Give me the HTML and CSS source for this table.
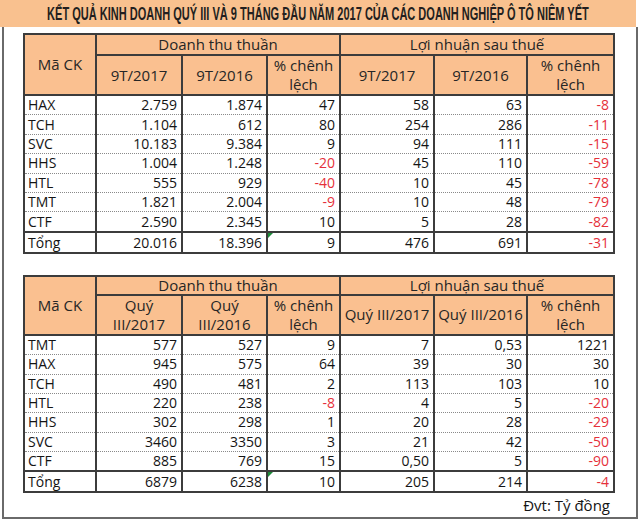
FILE: index.html
```html
<!DOCTYPE html>
<html lang="vi">
<head>
<meta charset="utf-8">
<title>Kết quả kinh doanh</title>
<link rel="stylesheet" href="styles.css">
</head>
<body>
<div class="page">
  <div class="title"><span class="title-text">KẾT QUẢ KINH DOANH QUÝ III VÀ 9 THÁNG ĐẦU NĂM 2017 CỦA CÁC DOANH NGHIỆP Ô TÔ NIÊM YẾT</span></div>
  <div class="frame">
    <table class="tbl t1">
      <colgroup><col class="c1"><col class="c2"><col class="c3"><col class="c4"><col class="c5"><col class="c6"><col class="c7"></colgroup>
      <thead>
        <tr class="h1"><th rowspan="2">Mã CK</th><th colspan="3">Doanh thu thuần</th><th colspan="3">Lợi nhuận sau thuế</th></tr>
        <tr class="h2"><th>9T/2017</th><th>9T/2016</th><th>% chênh<br>lệch</th><th>9T/2017</th><th>9T/2016</th><th>% chênh<br>lệch</th></tr>
      </thead>
      <tbody>
        <tr><td>HAX</td><td>2.759</td><td>1.874</td><td>47</td><td>58</td><td>63</td><td class="neg">-8</td></tr>
        <tr><td>TCH</td><td>1.104</td><td>612</td><td>80</td><td>254</td><td>286</td><td class="neg">-11</td></tr>
        <tr><td>SVC</td><td>10.183</td><td>9.384</td><td>9</td><td>94</td><td>111</td><td class="neg">-15</td></tr>
        <tr><td>HHS</td><td>1.004</td><td>1.248</td><td class="neg">-20</td><td>45</td><td>110</td><td class="neg">-59</td></tr>
        <tr><td>HTL</td><td>555</td><td>929</td><td class="neg">-40</td><td>10</td><td>45</td><td class="neg">-78</td></tr>
        <tr><td>TMT</td><td>1.821</td><td>2.004</td><td class="neg">-9</td><td>10</td><td>48</td><td class="neg">-79</td></tr>
        <tr class="last"><td>CTF</td><td>2.590</td><td>2.345</td><td>10</td><td>5</td><td>28</td><td class="neg">-82</td></tr>
        <tr class="total"><td>Tổng</td><td>20.016</td><td>18.396</td><td class="flag">9</td><td>476</td><td>691</td><td class="neg">-31</td></tr>
      </tbody>
    </table>

    <table class="tbl t2">
      <colgroup><col class="c1"><col class="c2"><col class="c3"><col class="c4"><col class="c5"><col class="c6"><col class="c7"></colgroup>
      <thead>
        <tr class="h1"><th rowspan="2">Mã CK</th><th colspan="3">Doanh thu thuần</th><th colspan="3">Lợi nhuận sau thuế</th></tr>
        <tr class="h2"><th>Quý<br>III/2017</th><th>Quý<br>III/2016</th><th>% chênh<br>lệch</th><th>Quý III/2017</th><th>Quý III/2016</th><th>% chênh<br>lệch</th></tr>
      </thead>
      <tbody>
        <tr><td>TMT</td><td>577</td><td>527</td><td>9</td><td>7</td><td>0,53</td><td>1221</td></tr>
        <tr><td>HAX</td><td>945</td><td>575</td><td>64</td><td>39</td><td>30</td><td>30</td></tr>
        <tr><td>TCH</td><td>490</td><td>481</td><td>2</td><td>113</td><td>103</td><td>10</td></tr>
        <tr><td>HTL</td><td>220</td><td>238</td><td class="neg">-8</td><td>4</td><td>5</td><td class="neg">-20</td></tr>
        <tr><td>HHS</td><td>302</td><td>298</td><td>1</td><td>20</td><td>28</td><td class="neg">-29</td></tr>
        <tr><td>SVC</td><td>3460</td><td>3350</td><td>3</td><td>21</td><td>42</td><td class="neg">-50</td></tr>
        <tr class="last"><td>CTF</td><td>885</td><td>769</td><td>15</td><td>0,50</td><td>5</td><td class="neg">-90</td></tr>
        <tr class="total"><td>Tổng</td><td>6879</td><td>6238</td><td class="flag">10</td><td>205</td><td>214</td><td class="neg">-4</td></tr>
      </tbody>
    </table>
    <div class="unit">Đvt: Tỷ đồng</div>
  </div>
</div>
</body>
</html>
```
FILE: styles.css
```css
html, body {
  margin: 0;
  padding: 0;
  background: #ffffff;
}
.page {
  width: 640px;
  height: 520px;
  overflow: hidden;
  font-family: "Open Sans", "Noto Sans", sans-serif;
  color: #141414;
}
.title {
  width: 636px;
  height: 27px;
  background: #f9c18f;
  display: flex;
  justify-content: center;
  align-items: center;
  white-space: nowrap;
}
.title-text {
  display: inline-block;
  flex: none;
  color: #231f20;
  font-family: "Liberation Sans", "Arial", sans-serif;
  font-weight: bold;
  font-size: 19px;
  line-height: 27px;
  transform: scaleX(0.58);
  transform-origin: center;
}
.frame {
  box-sizing: border-box;
  margin: 0 2px 0 2px;
  height: 492px;
  border: 2px solid #6a6a6a;
  border-top: none;
  padding: 6px 0 0 19px;
}
.tbl {
  border-collapse: collapse;
  table-layout: fixed;
  width: 590px;
  font-size: 14px;
  font-weight: 500;
  border: 2px solid #3c3c3c;
}
.c1 { width: 72px; }
.c2 { width: 86px; }
.c3 { width: 85px; }
.c4 { width: 73px; }
.c5 { width: 94px; }
.c6 { width: 93px; }
.c7 { width: 87px; }
.t1 { margin-bottom: 21px; }
.tbl th {
  background: #fac090;
  font-weight: normal;
  font-size: 15px;
  color: #262626;
  border: 2px solid #3c3c3c;
  padding: 0 2px;
  text-align: center;
  line-height: 19px;
}
.tbl .h1 th { height: 19px; }
.t2 .h1 th { height: 17px; line-height: 17px; }
.tbl .h2 th { height: 38px; }
.tbl td {
  text-align: right;
  padding: 0 4px 0 3px;
  height: 18.4px;
  line-height: 18px;
  border-left: 2px solid #3c3c3c;
  border-right: 2px solid #3c3c3c;
  border-bottom: 1px dotted #8a8a8a;
  white-space: nowrap;
}
.tbl td:first-child { text-align: left; }
.tbl .last td { border-bottom: 2px solid #3c3c3c; }
.tbl .total td { height: 19px; line-height: 19px; }
.neg { color: #e5303a; }
.flag { position: relative; }
.flag::before {
  content: "";
  position: absolute;
  left: 0;
  top: 0;
  border-top: 5px solid #1d8a3a;
  border-right: 5px solid transparent;
}
.unit {
  width: 590px;
  text-align: right;
  font-size: 15px;
  padding-top: 2px;
  box-sizing: border-box;
  padding-right: 3px;
}
```
